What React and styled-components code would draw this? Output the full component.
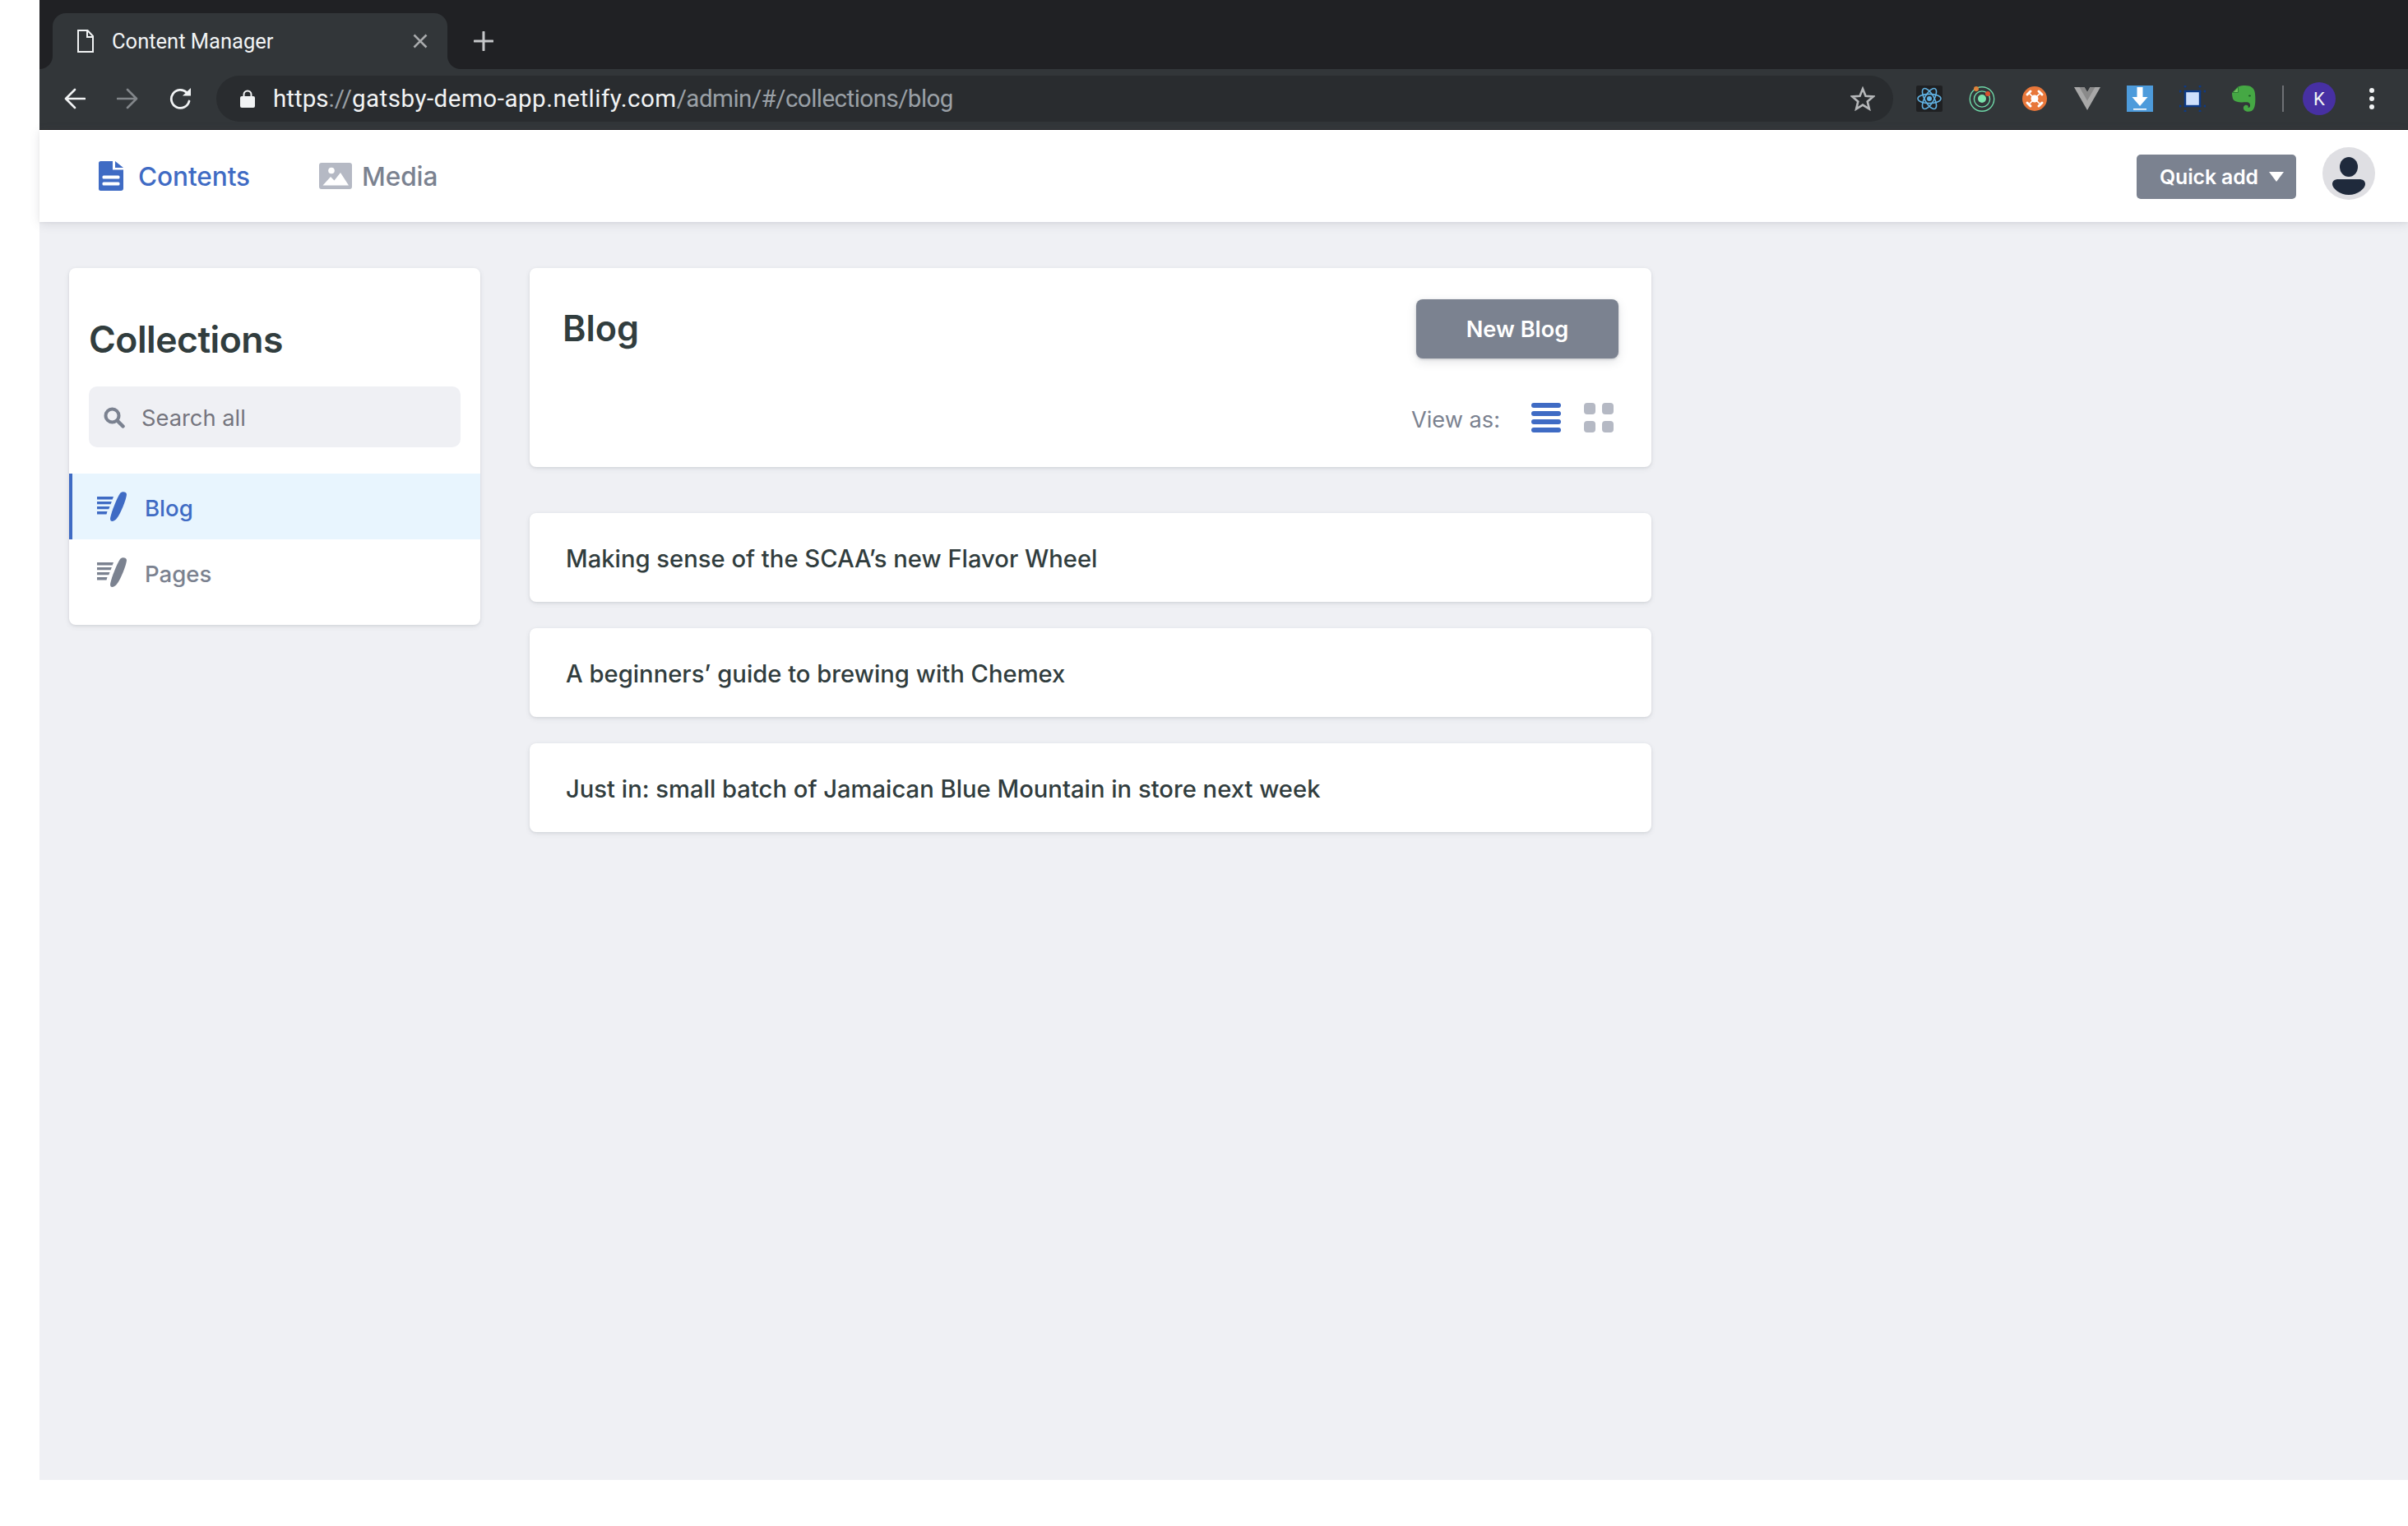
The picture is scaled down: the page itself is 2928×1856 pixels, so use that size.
import React from "react";
import styled, { createGlobalStyle } from "styled-components";

const BLUE = "#3f6bc4";
const GREY = "#7b8290";
const INK = "#313d3e";
const CARD_SHADOW = "0 2px 6px 0 rgba(68, 74, 87, 0.1), 0 1px 3px 0 rgba(68, 74, 87, 0.1)";

const Global = createGlobalStyle`
  html, body { margin: 0; padding: 0; background: #fff; }
  * { box-sizing: border-box; }
`;

const Screen = styled.div`
  width: 2928px;
  height: 1856px;
  padding: 0 0 56px 48px;
  background: #fff;
  font-family: Inter, "Liberation Sans", sans-serif;
  overflow: hidden;
`;
const Win = styled.div`
  height: 1800px;
  display: flex;
  flex-direction: column;
  background: #eff0f4;
`;
const TabStrip = styled.div`
  height: 84px;
  flex: none;
  background: #202124;
  padding: 16px 0 0 16px;
  display: flex;
  align-items: flex-start;
`;
const Tab = styled.div`
  position: relative;
  width: 480px;
  height: 68px;
  background: #323639;
  border-radius: 16px 16px 0 0;
  display: flex;
  align-items: center;
  padding: 0 24px 0 30px;
  font-family: Roboto, sans-serif;
  font-size: 25.5px;
  color: #f1f3f4;
  &::before, &::after {
    content: "";
    position: absolute;
    bottom: 0;
    width: 16px;
    height: 16px;
  }
  &::before { left: -16px; background: radial-gradient(circle at 0 0, #202124 15.5px, #323639 16.5px); }
  &::after { right: -16px; background: radial-gradient(circle at 100% 0, #202124 15.5px, #323639 16.5px); }
`;
const TabTitle = styled.span`
  flex: 1;
  margin-left: 22px;
  white-space: nowrap;
`;
const NewTab = styled.div`
  margin: 22px 0 0 32px;
  height: 24px;
  display: flex;
`;
const Toolbar = styled.div`
  height: 74px;
  flex: none;
  background: #323639;
  border-bottom: 1px solid #18191b;
  padding: 8px 0 9px 30px;
  display: flex;
  align-items: center;
`;
const NavIcons = styled.div`
  display: flex;
  align-items: center;
  gap: 38px;
  margin-right: 29px;
`;
const Omnibox = styled.div`
  width: 2039px;
  height: 56px;
  border-radius: 28px;
  background: #292c2f;
  display: flex;
  align-items: center;
  padding: 0 22px 0 29px;
  font-family: Roboto, sans-serif;
  font-size: 29.6px;
  color: #f1f3f4;
`;
const Url = styled.div`
  flex: 1;
  margin-left: 22px;
  white-space: nowrap;
`;
const Dim = styled.span`
  color: #9aa0a6;
  letter-spacing: ${(p) => p.$spacing || 0}px;
`;
const Domain = styled.span`
  letter-spacing: 0.48px;
`;
const Extensions = styled.div`
  flex: 1;
  display: flex;
  align-items: center;
  padding-left: 28px;
`;
const ExtSlot = styled.div`
  width: 32px;
  height: 32px;
  margin-right: 32px;
  display: flex;
`;
const ExtDivider = styled.div`
  width: 2px;
  height: 32px;
  background: #6e7175;
  margin: 0 23px 0 -3px;
`;
const Profile = styled.div`
  width: 40px;
  height: 40px;
  border-radius: 50%;
  background: #4730a3;
  color: #f1f3f4;
  display: flex;
  align-items: center;
  justify-content: center;
  font-family: Roboto, sans-serif;
  font-size: 22px;
  margin-right: 40px;
`;
const Dots = styled.div`
  width: 8px;
  display: flex;
  flex-direction: column;
  gap: 4px;
  i { display: block; width: 6px; height: 6px; margin-left: 1px; border-radius: 50%; background: #f1f3f4; }
`;
const Nav = styled.header`
  height: 112px;
  flex: none;
  background: #fff;
  box-shadow: 0 2px 12px rgba(68, 74, 87, 0.14), 0 1px 3px rgba(68, 74, 87, 0.06);
  display: flex;
  align-items: center;
  padding: 0 40px 0 72px;
  position: relative;
`;
const NavLink = styled.div`
  display: flex;
  align-items: center;
  gap: ${(p) => p.$gap}px;
  margin-right: 84px;
  font-size: 31.6px;
  font-weight: 500;
  letter-spacing: -0.1px;
  color: ${(p) => (p.$active ? BLUE : GREY)};
`;
const NavSpacer = styled.div`
  flex: 1;
`;
const QuickAdd = styled.div`
  width: 194px;
  height: 54px;
  margin: 2px 32px 0 0;
  border-radius: 5px;
  background: ${GREY};
  color: #fff;
  font-size: 24.8px;
  font-weight: 600;
  letter-spacing: -0.1px;
  display: flex;
  align-items: center;
  padding-left: 28px;
  gap: 13px;
`;
const Avatar = styled.div`
  width: 64px;
  height: 64px;
  margin-top: -6px;
  border-radius: 50%;
  background: #dfdfe3;
  display: flex;
`;
const Page = styled.main`
  flex: 1;
  display: flex;
  align-items: flex-start;
  gap: 60px;
  padding: 56px 0 0 36px;
`;
const Side = styled.aside`
  width: 500px;
  height: 434px;
  flex: none;
  background: #fff;
  border-radius: 8px;
  box-shadow: ${CARD_SHADOW};
  padding-top: 59px;
`;
const SideTitle = styled.h2`
  margin: 0 0 0 24px;
  height: 56px;
  font-size: 44.5px;
  line-height: 56px;
  font-weight: 600;
  letter-spacing: -0.5px;
  color: ${INK};
`;
const Search = styled.div`
  width: 452px;
  height: 74px;
  margin: 29px 0 32px 24px;
  border-radius: 10px;
  background: #eff0f4;
  display: flex;
  align-items: center;
  padding: 2px 0 0 18px;
  gap: 20px;
  font-size: 27.3px;
  color: #75757e;
`;
const SideRow = styled.div`
  height: 80px;
  display: flex;
  align-items: center;
  padding-left: ${(p) => (p.$active ? "30px" : "34px")};
  gap: 22px;
  font-size: 27.6px;
  font-weight: 500;
  color: ${(p) => (p.$active ? BLUE : GREY)};
  background: ${(p) => (p.$active ? "#e8f5fe" : "transparent")};
  border-left: ${(p) => (p.$active ? `4px solid ${BLUE}` : "none")};
`;
const SideLabel = styled.span`
  padding-top: 3px;
`;
const Main = styled.section`
  width: 1364px;
  flex: none;
  display: flex;
  flex-direction: column;
`;
const Head = styled.div`
  height: 242px;
  background: #fff;
  border-radius: 8px;
  box-shadow: ${CARD_SHADOW};
  padding: 38px 40px 0 40px;
  margin-bottom: 56px;
`;
const HeadTop = styled.div`
  display: flex;
  justify-content: space-between;
  align-items: flex-start;
  height: 72px;
`;
const HeadTitle = styled.h1`
  margin: 0;
  font-size: 43.2px;
  line-height: 70px;
  font-weight: 600;
  color: ${INK};
`;
const NewButton = styled.div`
  width: 246px;
  height: 72px;
  border-radius: 8px;
  background: ${GREY};
  color: #fff;
  font-size: 27.2px;
  font-weight: 600;
  display: flex;
  align-items: center;
  justify-content: center;
  box-shadow: 0 4px 12px 0 rgba(68, 74, 87, 0.15), 0 1px 3px 0 rgba(68, 74, 87, 0.25);
`;
const ViewRow = styled.div`
  display: flex;
  justify-content: flex-end;
  align-items: center;
  margin-top: 54px;
  height: 36px;
  padding-right: 6px;
  font-size: 27.2px;
  color: ${GREY};
`;
const ViewLabel = styled.span`
  margin-right: 38px;
  padding-top: 4px;
`;
const ListIcon = styled.div`
  width: 36px;
  height: 36px;
  margin-right: 28px;
  display: flex;
  flex-direction: column;
  justify-content: space-between;
  i { display: block; height: 6px; border-radius: 3px; background: ${BLUE}; }
`;
const GridIcon = styled.div`
  width: 36px;
  height: 36px;
  display: grid;
  grid-template-columns: 14px 14px;
  grid-template-rows: 14px 14px;
  gap: 8px;
  i { display: block; border-radius: 4px; background: #b5b9c4; }
`;
const Entries = styled.div`
  display: flex;
  flex-direction: column;
  gap: 32px;
`;
const Entry = styled.div`
  height: 108px;
  background: #fff;
  border-radius: 8px;
  box-shadow: ${CARD_SHADOW};
  display: flex;
  align-items: center;
  padding: 3px 0 0 44px;
  font-size: 29.2px;
  font-weight: 500;
  color: ${INK};
`;

const Bare = styled.svg`
  display: block;
  flex: none;
`;

const PostIcon = ({ color }) => (
  <Bare width="36" height="36" viewBox="0 0 36 36">
    <g fill={color}>
      <path d="M0 6h20l-1.300 3.600H0z" />
      <path d="M0 12h17.800l-1.200 3.200H0z" />
      <path d="M0 18h15.500l-1.200 3.200H0z" />
      <path d="M0 24h12.500l-1 3.500H0z" />
      <path d="M28 2C30-.5 36-.3 36 3.500 35.500 9 31 20 27.500 27 25 32 21.500 36 18.500 36 16 36 15.800 33.500 16.300 31 17.800 24 24 8 28 2z" />
    </g>
  </Bare>
);

const ReactExt = () => (
  <Bare width="32" height="32" viewBox="0 0 32 32">
    <rect width="32" height="32" rx="2" fill="#1f2022" />
    <g fill="none" stroke="#61b3e4" strokeWidth="1.600">
      <ellipse cx="16" cy="16" rx="14" ry="5.600" />
      <ellipse cx="16" cy="16" rx="14" ry="5.600" transform="rotate(60 16 16)" />
      <ellipse cx="16" cy="16" rx="14" ry="5.600" transform="rotate(120 16 16)" />
    </g>
    <circle cx="16" cy="16" r="3" fill="#61b3e4" />
  </Bare>
);
const OrbitExt = () => (
  <Bare width="32" height="32" viewBox="0 0 32 32">
    <circle cx="16" cy="16.500" r="14.700" fill="none" stroke="#6fd8a8" strokeWidth="1.400" />
    <circle cx="16" cy="16.500" r="9.600" fill="none" stroke="#6fd8a8" strokeWidth="1.400" />
    <circle cx="16" cy="16" r="5" fill="#7be3ad" />
    <circle cx="9" cy="4" r="3" fill="#e0823a" />
    <circle cx="23" cy="10" r="3" fill="#d8502f" />
  </Bare>
);
const DroneExt = () => (
  <Bare width="32" height="32" viewBox="0 0 32 32">
    <circle cx="16" cy="16" r="15" fill="#e8773a" />
    <g stroke="#fff" fill="none">
      <path d="M10 10l12 12M22 10L10 22" strokeWidth="1.600" />
      <path d="M7 11L11 7M21 7l4 4M7 21l4 4M21 25l4-4" strokeWidth="3" strokeLinecap="round" />
    </g>
    <circle cx="16" cy="16" r="4.500" fill="#fff" />
  </Bare>
);
const VueExt = () => (
  <Bare width="32" height="32" viewBox="0 0 32 32">
    <path d="M0 2h12.500L16 8l3.500-6H32L16 30z" fill="#a8a8a8" />
    <path d="M6.500 2h6L16 8l3.500-6h6L16 18.500z" fill="#8a8a8a" />
  </Bare>
);
const DownExt = () => (
  <Bare width="32" height="32" viewBox="0 0 32 32">
    <rect width="32" height="32" fill="#4d9bdb" />
    <path d="M12.500 2h7v12h6L16 25 6.500 14h6z" fill="#fff" />
    <rect x="8" y="28" width="16" height="1.600" fill="#fff" />
  </Bare>
);
const FrameExt = () => (
  <Bare width="32" height="32" viewBox="0 0 32 32">
    <rect x="7" y="7" width="18" height="18" fill="#cfe0fb" stroke="#0d3a86" strokeWidth="2.400" />
    <g fill="#0d3a86">
      {[[7, 1], [25, 1], [1, 7], [31, 7], [1, 25], [31, 25], [7, 31], [25, 31], [7, 7], [25, 7], [7, 25], [25, 25]].map(([x, y]) => (
        <circle key={`${x}-${y}`} cx={x} cy={y} r="1.500" />
      ))}
    </g>
  </Bare>
);
const ElephantExt = () => (
  <Bare width="30" height="32" viewBox="0 0 30 32">
    <path d="M7.500 1.500C10 .2 13 0 16 0c7 0 11.500 3 12 10 .7 7 .5 14-1.500 18-2 4-7.500 5-11 2.500-2.500-2-2-5.500.5-6.500 2.500-.8 4.500 1 3.500 3 2.500.3 3.200-2.500 2-5-1.500-2.500-6-1.500-9-1.500-5 0-10-1-11.500-4.500C.3 13 0 11 0 9z" fill="#45a844" />
    <path d="M.8 8.500l6.700-6.700v6.700z" fill="#6fbf5e" stroke="#2d7f35" strokeWidth="1" />
    <ellipse cx="21.500" cy="12.500" rx="1.500" ry="1" fill="#1f5a27" />
  </Bare>
);

export default function App() {
  return (
    <Screen>
      <Global />
      <Win>
        <TabStrip>
          <Tab>
            <Bare width="20" height="28" viewBox="0 0 20 28">
              <path d="M1 1h11.500L19 8v19H1z" fill="none" stroke="#f1f3f4" strokeWidth="2" />
              <path d="M12 1v8h7" fill="none" stroke="#f1f3f4" strokeWidth="2" />
            </Bare>
            <TabTitle>Content Manager</TabTitle>
            <Bare width="18" height="18" viewBox="0 0 18 18">
              <path d="M1.500 1.500l15 15M16.500 1.500l-15 15" stroke="#a9abad" strokeWidth="2.600" />
            </Bare>
          </Tab>
          <NewTab>
            <Bare width="24" height="24" viewBox="0 0 24 24">
              <path d="M12 1v22M1 12h22" stroke="#c5c7c9" strokeWidth="3" strokeLinecap="round" />
            </Bare>
          </NewTab>
        </TabStrip>
        <Toolbar>
          <NavIcons>
            <Bare width="26" height="26" viewBox="0 0 26 26">
              <path d="M25 13H3M13 2L2 13l11 11" fill="none" stroke="#f1f3f4" strokeWidth="2.600" strokeLinecap="round" strokeLinejoin="round" />
            </Bare>
            <Bare width="26" height="26" viewBox="0 0 26 26">
              <path d="M1 13h22M13 2l11 11-11 11" fill="none" stroke="#82868a" strokeWidth="2.600" strokeLinecap="round" strokeLinejoin="round" />
            </Bare>
            <Bare width="28" height="26" viewBox="0 0 28 26">
              <path d="M21 5.500A11 11 0 1 0 24 16" fill="none" stroke="#f1f3f4" strokeWidth="2.800" strokeLinecap="round" />
              <path d="M16 9.500h10V0z" fill="#f1f3f4" />
            </Bare>
          </NavIcons>
          <Omnibox>
            <Bare width="18" height="22" viewBox="0 0 18 22">
              <path d="M4.500 9V6a4.500 4.500 0 0 1 9 0v3" fill="none" stroke="#f1f3f4" strokeWidth="2" />
              <rect y="8" width="18" height="14" rx="2" fill="#f1f3f4" />
            </Bare>
            <Url>
              https<Dim>://</Dim><Domain>gatsby-demo-app.netlify.com</Domain><Dim $spacing={-0.55}>/admin/#/collections/blog</Dim>
            </Url>
            <Bare width="30" height="30" viewBox="0 0 30 30">
              <path d="M15 3l3.500 8.700 9.300.7-7.100 6 2.200 9.100L15 22.600 7.100 27.500l2.200-9.100-7.100-6 9.300-.7z" fill="none" stroke="#b6b8ba" strokeWidth="2.600" />
            </Bare>
          </Omnibox>
          <Extensions>
            <ExtSlot><ReactExt /></ExtSlot>
            <ExtSlot><OrbitExt /></ExtSlot>
            <ExtSlot><DroneExt /></ExtSlot>
            <ExtSlot><VueExt /></ExtSlot>
            <ExtSlot><DownExt /></ExtSlot>
            <ExtSlot><FrameExt /></ExtSlot>
            <ExtSlot><ElephantExt /></ExtSlot>
            <ExtDivider />
            <Profile>K</Profile>
            <Dots><i /><i /><i /></Dots>
          </Extensions>
        </Toolbar>
        <Nav>
          <NavLink $active $gap={18}>
            <Bare width="30" height="36" viewBox="0 0 30 36">
              <path d="M2.500 0H17v10.500h13V33a3 3 0 0 1-3 3H2.500A2.500 2.500 0 0 1 0 33.500v-31A2.500 2.500 0 0 1 2.500 0zM20 0l10 8H20z" fill={BLUE} />
              <rect x="4.500" y="17.500" width="21" height="4" rx="1.500" fill="#fff" />
              <rect x="4.500" y="25.500" width="21" height="4" rx="1.500" fill="#fff" />
            </Bare>
            Contents
          </NavLink>
          <NavLink $gap={12}>
            <Bare width="40" height="32" viewBox="0 0 40 32">
              <rect width="40" height="32" rx="3" fill="#b5b9c4" />
              <circle cx="15" cy="9.500" r="3.800" fill="#fff" />
              <path d="M4.500 27.500L14 17l4.500 4.500L26 12l10 15.500z" fill="#fff" />
            </Bare>
            Media
          </NavLink>
          <NavSpacer />
          <QuickAdd>
            Quick add
            <Bare width="18" height="12" viewBox="0 0 18 12">
              <path d="M0 0h18L9 12z" fill="#fff" />
            </Bare>
          </QuickAdd>
          <Avatar>
            <Bare width="64" height="64" viewBox="0 0 64 64">
              <ellipse cx="32" cy="24" rx="11" ry="12" fill="#1f2a3c" />
              <path d="M12 45c0-4 3-6 7-6h26c4 0 7 2 7 6 0 5-9 13-20 13S12 50 12 45z" fill="#1f2a3c" />
            </Bare>
          </Avatar>
        </Nav>
        <Page>
          <Side>
            <SideTitle>Collections</SideTitle>
            <Search>
              <Bare width="26" height="26" viewBox="0 0 26 26">
                <circle cx="10.500" cy="10.500" r="8" fill="none" stroke={GREY} strokeWidth="4" />
                <path d="M16.500 16.500l7 7" stroke={GREY} strokeWidth="4.500" strokeLinecap="round" />
              </Bare>
              Search all
            </Search>
            <SideRow $active>
              <PostIcon color={BLUE} />
              <SideLabel>Blog</SideLabel>
            </SideRow>
            <SideRow>
              <PostIcon color={GREY} />
              <SideLabel>Pages</SideLabel>
            </SideRow>
          </Side>
          <Main>
            <Head>
              <HeadTop>
                <HeadTitle>Blog</HeadTitle>
                <NewButton>New Blog</NewButton>
              </HeadTop>
              <ViewRow>
                <ViewLabel>View as:</ViewLabel>
                <ListIcon><i /><i /><i /><i /></ListIcon>
                <GridIcon><i /><i /><i /><i /></GridIcon>
              </ViewRow>
            </Head>
            <Entries>
              <Entry>Making sense of the SCAA’s new Flavor Wheel</Entry>
              <Entry>A beginners’ guide to brewing with Chemex</Entry>
              <Entry>Just in: small batch of Jamaican Blue Mountain in store next week</Entry>
            </Entries>
          </Main>
        </Page>
      </Win>
    </Screen>
  );
}
